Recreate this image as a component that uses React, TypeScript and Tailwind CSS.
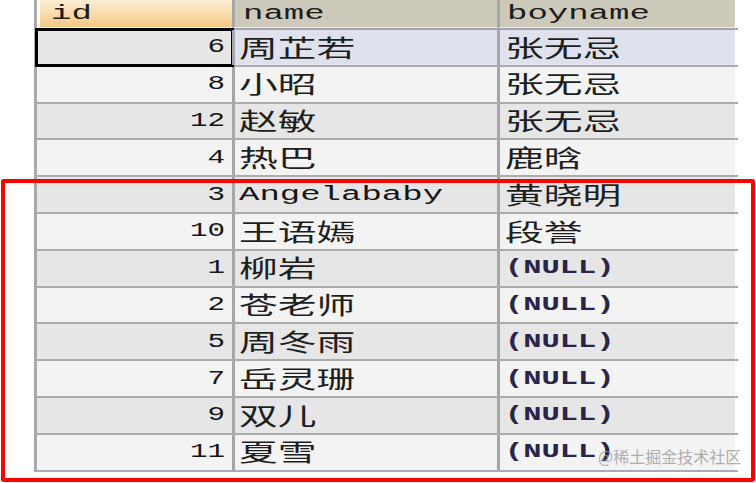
import React from 'react';

type Cell = { text: string; cjk?: boolean; nul?: boolean };

const rows: { id: number; name: Cell; boy: Cell }[] = [
    { id: 6, name: { text: '周芷若', cjk: true }, boy: { text: '张无忌', cjk: true } },
    { id: 8, name: { text: '小昭', cjk: true }, boy: { text: '张无忌', cjk: true } },
    { id: 12, name: { text: '赵敏', cjk: true }, boy: { text: '张无忌', cjk: true } },
    { id: 4, name: { text: '热巴', cjk: true }, boy: { text: '鹿晗', cjk: true } },
    { id: 3, name: { text: 'Angelababy' }, boy: { text: '黄晓明', cjk: true } },
    { id: 10, name: { text: '王语嫣', cjk: true }, boy: { text: '段誉', cjk: true } },
    { id: 1, name: { text: '柳岩', cjk: true }, boy: { text: '(NULL)', nul: true } },
    { id: 2, name: { text: '苍老师', cjk: true }, boy: { text: '(NULL)', nul: true } },
    { id: 5, name: { text: '周冬雨', cjk: true }, boy: { text: '(NULL)', nul: true } },
    { id: 7, name: { text: '岳灵珊', cjk: true }, boy: { text: '(NULL)', nul: true } },
    { id: 9, name: { text: '双儿', cjk: true }, boy: { text: '(NULL)', nul: true } },
    { id: 11, name: { text: '夏雪', cjk: true }, boy: { text: '(NULL)', nul: true } },
];

const mono = "font-['Liberation_Mono','Courier_New',monospace]";
const cjkFont = "font-['Noto_Sans_CJK_SC','Noto_Sans',sans-serif]";

const CellText = ({ cell }: { cell: Cell }) => {
    if (cell.cjk) {
        return (
            <span className={`inline-block origin-left scale-x-[1.65] text-[23.5px] leading-none text-[#1e1e1e] ${cjkFont}`}>
                {cell.text}
            </span>
        );
    }
    if (cell.nul) {
        return (
            <span className={`inline-block origin-left scale-x-[1.52] text-[20px] font-bold leading-none text-[#2a2448] ${mono}`}>
                {cell.text}
            </span>
        );
    }
    return (
        <span className={`inline-block origin-left scale-x-[1.7] text-[20px] leading-none text-[#161616] ${mono}`}>
            {cell.text}
        </span>
    );
};

export default function App() {
    return (
        <div className="relative w-[756px] h-[483px] overflow-hidden bg-white">
            <div className="pl-[34px]">
                <div className="w-[704px] border-l-[3px] border-[#a9a9a9]">
                    {/* header */}
                    <div className="grid grid-cols-[195px_265px_238px] h-[30px] border-b-2 border-[#a3a3aa]">
                        <div className="flex items-center pl-[11px] bg-gradient-to-b from-[#fdeed4] to-[#f5c885] border-l-[3px] border-white border-b border-b-[#fff6e6]">
                            <span className={`inline-block origin-left scale-x-[1.7] text-[20px] leading-none text-[#1c1c1c] ${mono}`}>id</span>
                        </div>
                        <div className="flex items-center pl-[8px] bg-[#cdcabb] border-l-[3px] border-[#a6a6a6] border-b border-b-[#eeeee6]">
                            <span className={`inline-block origin-left scale-x-[1.7] text-[20px] leading-none text-[#1c1c1c] ${mono}`}>name</span>
                        </div>
                        <div className="flex items-center pl-[7px] bg-[#cdcabb] border-l-[3px] border-[#a6a6a6] border-b border-b-[#eeeee6]">
                            <span className={`inline-block origin-left scale-x-[1.7] text-[20px] leading-none text-[#1c1c1c] ${mono}`}>boyname</span>
                        </div>
                    </div>
                    {rows.map((r, i) => {
                        const selected = i === 0;
                        const bg = i % 2 === 1 ? 'bg-[#f3f3f3]' : 'bg-[#e6e6e6]';
                        const dataBg = selected ? 'bg-[#dfe2ec]' : bg;
                        return (
                            <div key={r.id} className="grid grid-cols-[195px_265px_238px] h-[36.8px] border-b-2 border-[#ababab]">
                                <div className={`flex items-center justify-end pr-[7px] ${bg} ${selected ? 'outline-[3px] outline-black outline-solid -outline-offset-1' : ''}`}>
                                    <span className={`inline-block origin-right scale-x-[1.46] text-[20px] leading-none text-[#161616] ${mono}`}>
                                        {r.id}
                                    </span>
                                </div>
                                <div className={`flex items-center pl-[4px] border-l-[3px] border-[#a6a6a6] ${dataBg}`}>
                                    <CellText cell={r.name} />
                                </div>
                                <div className={`flex items-center pl-[5px] border-l-[3px] border-[#a6a6a6] ${dataBg}`}>
                                    <CellText cell={r.boy} />
                                </div>
                            </div>
                        );
                    })}
                </div>
            </div>

            {/* highlight box */}
            <div className="absolute left-[1px] top-[179px] w-[754px] h-[303px] border-4 border-[#ff0000] rounded-[3px]" />

            {/* watermark */}
            <div className={`absolute left-[598px] top-[448px] text-[16px] leading-none text-[#9a9a9a]/80 ${cjkFont}`}>
                @稀土掘金技术社区
            </div>
        </div>
    );
}
